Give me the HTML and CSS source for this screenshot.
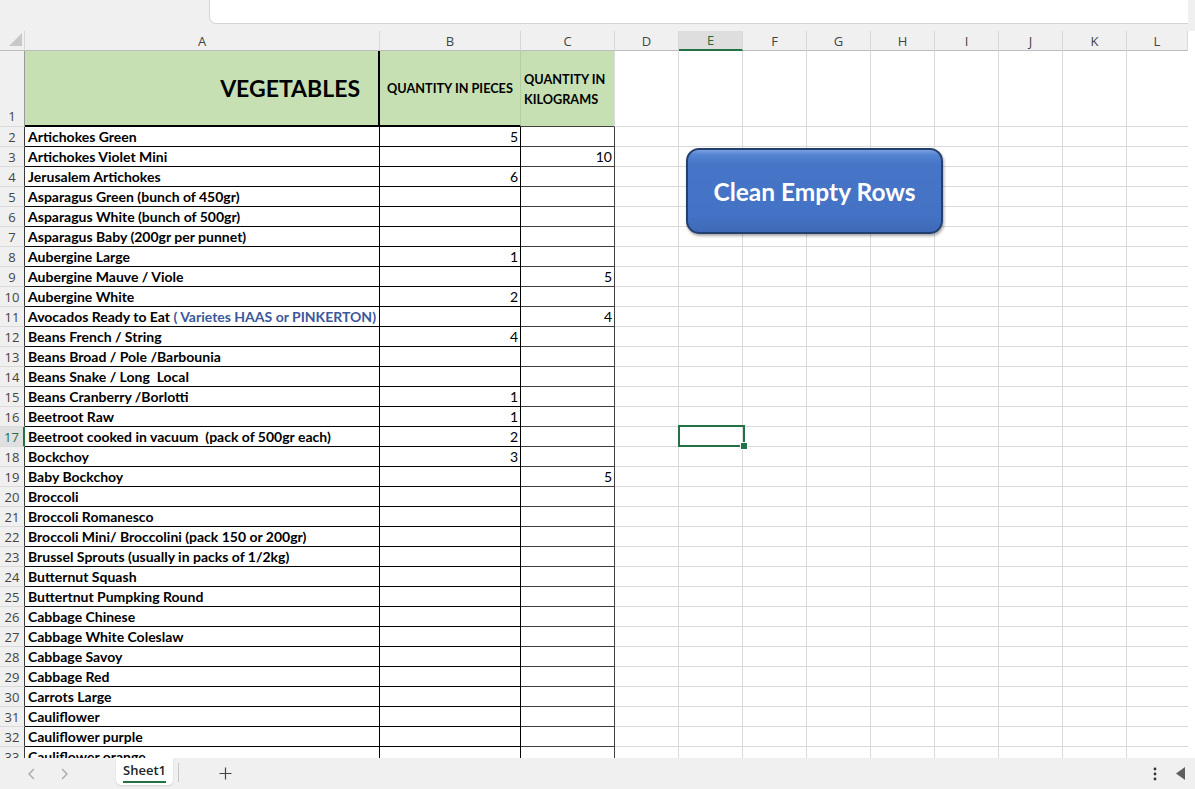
FILE: index.html
```html
<!DOCTYPE html>
<html>
<head>
<meta charset="utf-8">
<link rel="stylesheet" href="styles.css">
</head>
<body>
<div class="app">
  <div class="topbar"><div class="fbar"></div></div>
  <div class="sheet">
    <div class="row hdr">
      <div class="corner"><div class="tri"></div></div>
      <div class="ch">A</div><div class="ch">B</div><div class="ch">C</div><div class="ch">D</div>
      <div class="ch selh">E</div><div class="ch">F</div><div class="ch">G</div><div class="ch">H</div>
      <div class="ch">I</div><div class="ch">J</div><div class="ch">K</div><div class="ch">L</div>
    </div>
    <div class="row r1">
      <div class="rh">1</div>
      <div class="c g a1">VEGETABLES</div>
      <div class="c g b1">QUANTITY IN PIECES</div>
      <div class="c g c1">QUANTITY IN KILOGRAMS</div>
      <div class="rest"></div>
    </div>
    <div class="row"><div class="rh">2</div><div class="c">Artichokes Green</div><div class="c n">5</div><div class="c cc n"></div><div class="rest"></div></div>
    <div class="row"><div class="rh">3</div><div class="c">Artichokes Violet Mini</div><div class="c n"></div><div class="c cc n">10</div><div class="rest"></div></div>
    <div class="row"><div class="rh">4</div><div class="c">Jerusalem Artichokes</div><div class="c n">6</div><div class="c cc n"></div><div class="rest"></div></div>
    <div class="row"><div class="rh">5</div><div class="c">Asparagus Green (bunch of 450gr)</div><div class="c n"></div><div class="c cc n"></div><div class="rest"></div></div>
    <div class="row"><div class="rh">6</div><div class="c">Asparagus White (bunch of 500gr)</div><div class="c n"></div><div class="c cc n"></div><div class="rest"></div></div>
    <div class="row"><div class="rh">7</div><div class="c">Asparagus Baby (200gr per punnet)</div><div class="c n"></div><div class="c cc n"></div><div class="rest"></div></div>
    <div class="row"><div class="rh">8</div><div class="c">Aubergine Large</div><div class="c n">1</div><div class="c cc n"></div><div class="rest"></div></div>
    <div class="row"><div class="rh">9</div><div class="c">Aubergine Mauve / Viole</div><div class="c n"></div><div class="c cc n">5</div><div class="rest"></div></div>
    <div class="row"><div class="rh">10</div><div class="c">Aubergine White</div><div class="c n">2</div><div class="c cc n"></div><div class="rest"></div></div>
    <div class="row"><div class="rh">11</div><div class="c">Avocados Ready to Eat&nbsp;<span class="blue">( Varietes HAAS or PINKERTON)</span></div><div class="c n"></div><div class="c cc n">4</div><div class="rest"></div></div>
    <div class="row"><div class="rh">12</div><div class="c">Beans French / String</div><div class="c n">4</div><div class="c cc n"></div><div class="rest"></div></div>
    <div class="row"><div class="rh">13</div><div class="c">Beans Broad / Pole /Barbounia</div><div class="c n"></div><div class="c cc n"></div><div class="rest"></div></div>
    <div class="row"><div class="rh">14</div><div class="c">Beans Snake / Long&nbsp; Local</div><div class="c n"></div><div class="c cc n"></div><div class="rest"></div></div>
    <div class="row"><div class="rh">15</div><div class="c">Beans Cranberry /Borlotti</div><div class="c n">1</div><div class="c cc n"></div><div class="rest"></div></div>
    <div class="row"><div class="rh">16</div><div class="c">Beetroot Raw</div><div class="c n">1</div><div class="c cc n"></div><div class="rest"></div></div>
    <div class="row"><div class="rh selr">17</div><div class="c">Beetroot cooked in vacuum&nbsp; (pack of 500gr each)</div><div class="c n">2</div><div class="c cc n"></div><div class="rest"></div></div>
    <div class="row"><div class="rh">18</div><div class="c">Bockchoy</div><div class="c n">3</div><div class="c cc n"></div><div class="rest"></div></div>
    <div class="row"><div class="rh">19</div><div class="c">Baby Bockchoy</div><div class="c n"></div><div class="c cc n">5</div><div class="rest"></div></div>
    <div class="row"><div class="rh">20</div><div class="c">Broccoli</div><div class="c n"></div><div class="c cc n"></div><div class="rest"></div></div>
    <div class="row"><div class="rh">21</div><div class="c">Broccoli Romanesco</div><div class="c n"></div><div class="c cc n"></div><div class="rest"></div></div>
    <div class="row"><div class="rh">22</div><div class="c">Broccoli Mini/ Broccolini (pack 150 or 200gr)</div><div class="c n"></div><div class="c cc n"></div><div class="rest"></div></div>
    <div class="row"><div class="rh">23</div><div class="c">Brussel Sprouts (usually in packs of 1/2kg)</div><div class="c n"></div><div class="c cc n"></div><div class="rest"></div></div>
    <div class="row"><div class="rh">24</div><div class="c">Butternut Squash</div><div class="c n"></div><div class="c cc n"></div><div class="rest"></div></div>
    <div class="row"><div class="rh">25</div><div class="c">Buttertnut Pumpking Round</div><div class="c n"></div><div class="c cc n"></div><div class="rest"></div></div>
    <div class="row"><div class="rh">26</div><div class="c">Cabbage Chinese</div><div class="c n"></div><div class="c cc n"></div><div class="rest"></div></div>
    <div class="row"><div class="rh">27</div><div class="c">Cabbage White Coleslaw</div><div class="c n"></div><div class="c cc n"></div><div class="rest"></div></div>
    <div class="row"><div class="rh">28</div><div class="c">Cabbage Savoy</div><div class="c n"></div><div class="c cc n"></div><div class="rest"></div></div>
    <div class="row"><div class="rh">29</div><div class="c">Cabbage Red</div><div class="c n"></div><div class="c cc n"></div><div class="rest"></div></div>
    <div class="row"><div class="rh">30</div><div class="c">Carrots Large</div><div class="c n"></div><div class="c cc n"></div><div class="rest"></div></div>
    <div class="row"><div class="rh">31</div><div class="c">Cauliflower</div><div class="c n"></div><div class="c cc n"></div><div class="rest"></div></div>
    <div class="row"><div class="rh">32</div><div class="c">Cauliflower purple</div><div class="c n"></div><div class="c cc n"></div><div class="rest"></div></div>
    <div class="row"><div class="rh">33</div><div class="c">Cauliflower orange</div><div class="c n"></div><div class="c cc n"></div><div class="rest"></div></div>

    <div class="btn">Clean Empty Rows</div>
    <div class="selbox"></div>
  </div>
  <div class="tabs">
    <div class="nav">
      <svg width="10" height="14" viewBox="0 0 10 14"><polyline points="7,2 2,7 7,12" fill="none" stroke="#a6a6a6" stroke-width="1.3"/></svg>
      <svg width="10" height="14" viewBox="0 0 10 14"><polyline points="3,2 8,7 3,12" fill="none" stroke="#a6a6a6" stroke-width="1.3"/></svg>
    </div>
    <div class="tab"><span class="tablabel">Sheet1</span></div>
    <div class="sep"></div>
    <div class="plus"><svg width="13" height="13" viewBox="0 0 13 13"><path d="M6.5 0.5v12M0.5 6.5h12" stroke="#444" stroke-width="1.2" fill="none"/></svg></div>
    <div class="right">
      <svg width="4" height="14" viewBox="0 0 4 14"><circle cx="2" cy="2" r="1.4" fill="#333"/><circle cx="2" cy="7" r="1.4" fill="#333"/><circle cx="2" cy="12" r="1.4" fill="#333"/></svg>
      <svg class="tri2" width="9" height="13" viewBox="0 0 9 13"><polygon points="9,0 9,13 0,6.5" fill="#5f5f5f"/></svg>
    </div>
  </div>
</div>
</body>
</html>
```

FILE: styles.css
```css
* { box-sizing: border-box; }
html, body { margin: 0; padding: 0; }
body {
  width: 1195px;
  height: 789px;
  overflow: hidden;
  background: #fff;
  font-family: Lato, "Open Sans", sans-serif;
}
.app { display: flex; flex-direction: column; height: 789px; }

.topbar {
  height: 31px;
  flex: none;
  background: #f0f0f0;
  display: flex;
  padding-left: 209px;
  padding-right: 7px;
  align-items: flex-start;
}
.fbar {
  flex: 1;
  height: 24px;
  background: #fff;
  border-left: 1px solid #d4d4d4;
  border-bottom: 1px solid #d4d4d4;
  border-bottom-left-radius: 7px;
}

.sheet {
  position: relative;
  flex: 1;
  overflow: hidden;
  width: 1188px;
}
.row {
  display: grid;
  grid-template-columns: 25px 355px 141px 94px repeat(8, 64px) 1fr;
  height: 20px;
}
.hdr { background: #f0f0f0; }
.corner {
  display: flex;
  justify-content: flex-end;
  align-items: flex-end;
  padding: 0 2px 4px 0;
  border-bottom: 1px solid #bcbcbc;
  border-right: 1px solid #d8d8d8;
}
.tri {
  width: 13px;
  height: 13px;
  background: #c8c8c8;
  clip-path: polygon(100% 0, 100% 100%, 0 100%);
}
.ch {
  border-right: 1px solid #d8d8d8;
  border-bottom: 1px solid #bcbcbc;
  font-family: "Open Sans", sans-serif;
  font-size: 13px;
  color: #444;
  display: flex;
  align-items: center;
  justify-content: center;
}
.selh {
  background: #dedede;
  color: #1e6b41;
  border-bottom: 2px solid #217346;
}

.rh {
  background: #f0f0f0;
  border-right: 1px solid #3a3a3a;
  border-bottom: 1px solid #dadada;
  font-family: "Open Sans", sans-serif;
  font-size: 13px;
  color: #444;
  display: flex;
  align-items: center;
  justify-content: center;
}
.selr {
  background: #e0e0e0;
  color: #217346;
  border-right: 2px solid #217346;
}

.c {
  border-right: 1px solid #000;
  border-bottom: 1px solid #000;
  font-weight: 700;
  font-size: 14px;
  color: #000;
  padding: 0 3px;
  display: flex;
  align-items: center;
  white-space: nowrap;
  overflow: hidden;
}
.n { justify-content: flex-end; font-weight: 400; padding-right: 2px; }
.cc { border-right-color: #404040; border-bottom-color: #404040; }
.blue { color: #3b5899; }

.rest {
  grid-column: 5 / -1;
  border-bottom: 1px solid #dadada;
  background: repeating-linear-gradient(to right, transparent 0 63px, #dadada 63px 64px);
}

.r1 { height: 76px; }
.r1 .rh {
  align-items: flex-end;
  padding-bottom: 1px;
  border-right-color: #9a9a9a;
}
.g { background: #c6e0b4; }
.a1 {
  border-right: 2px solid #000;
  border-bottom: 2px solid #000;
  justify-content: flex-end;
  padding-right: 18px;
  font-size: 23px;
}
.b1 {
  border-bottom: 2px solid #000;
  border-right: 1px solid #b3cca2;
  justify-content: center;
  font-size: 12.7px;
  padding: 0 2px;
}
.c1 {
  border-bottom: 1px solid #404040;
  border-right: 1px solid #dadada;
  font-size: 12.7px;
  line-height: 20px;
  white-space: normal;
  padding: 0 2px 0 3px;
}

.btn {
  position: absolute;
  left: 686px;
  top: 117px;
  width: 257px;
  height: 86px;
  border-radius: 13px;
  border: 2px solid #253f6c;
  background: linear-gradient(#7aa1e0 0, #5584d3 6%, #4674c6 18%, #4472c4 80%, #3e69b6 100%);
  box-shadow: 1px 2px 3px rgba(0, 0, 0, 0.35);
  color: #fff;
  font-weight: 700;
  font-size: 24.5px;
  display: flex;
  align-items: center;
  justify-content: center;
}
.selbox {
  position: absolute;
  left: 678px;
  top: 394px;
  width: 67px;
  height: 22px;
  border: 2px solid #217346;
}
.selbox::after {
  content: "";
  position: absolute;
  right: -5px;
  bottom: -5px;
  width: 6px;
  height: 6px;
  background: #217346;
  border: 1px solid #fff;
}

.tabs {
  height: 31px;
  flex: none;
  background: #f0f0f0;
  display: flex;
  align-items: flex-start;
}
.nav {
  width: 116px;
  height: 31px;
  display: flex;
  align-items: center;
  gap: 22px;
  padding-left: 27px;
}
.tab {
  width: 57px;
  height: 27px;
  background: #fff;
  border-radius: 0 0 5px 5px;
  box-shadow: 0 1px 2px rgba(0, 0, 0, 0.12);
  display: flex;
  justify-content: center;
  align-items: flex-start;
  padding-top: 3px;
}
.tablabel {
  font-family: "Open Sans", sans-serif;
  font-weight: 600;
  font-size: 13px;
  color: #222;
  line-height: 18px;
  padding-bottom: 2px;
  border-bottom: 2px solid #217346;
}
.sep {
  width: 1px;
  height: 19px;
  background: #c6c6c6;
  margin: 5px 0 0 5px;
}
.plus {
  margin-left: 40px;
  height: 31px;
  display: flex;
  align-items: center;
}
.right {
  margin-left: auto;
  height: 31px;
  display: flex;
  align-items: center;
  gap: 19px;
  padding-right: 10px;
}
```
